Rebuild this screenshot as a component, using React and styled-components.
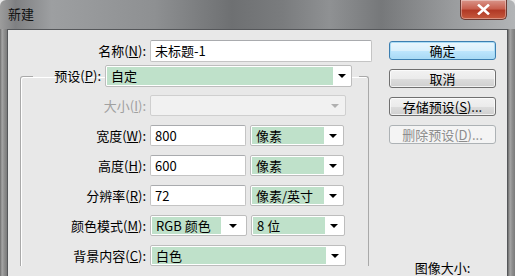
import React from 'react'
import styled, { createGlobalStyle, css } from 'styled-components';

const GlobalStyle = createGlobalStyle`
  html, body {
    margin: 0;
    padding: 0;
    background: #e8e8e8;
  }
  body {
    font-family: "Noto Sans CJK SC", "Noto Sans", sans-serif;
    font-size: 13px;
    color: #000;
  }
`;

const Window = styled.div`
  width: 515px;
  height: 276px;
  overflow: hidden;
  display: flex;
  flex-direction: column;
  background: linear-gradient(90deg, #9c9c9c 0%, #7f8082 3%, #9d9fa1 10%, #8e9092 30%, #6e7072 45%, #7a7c7e 55%, #8f9193 64%, #76787a 74%, #9a9c9e 88%, #b2b4b6 100%);
  border-radius: 6px 6px 0 0;
`;

const TitleBar = styled.div`
  height: 29px;
  flex: none;
  display: flex;
  align-items: flex-start;
`;

const Title = styled.div`
  padding: 6px 0 0 8px;
  font-size: 13px;
  line-height: 16px;
  color: #111;
`;

const CloseButton = styled.div`
  margin-left: auto;
  margin-right: 8px;
  width: 45px;
  height: 19px;
  display: flex;
  align-items: center;
  justify-content: center;
  background: linear-gradient(#d9958a 0%, #c8604f 45%, #b13a26 55%, #c65a3e 100%);
  border: 1px solid #6b3a33;
  border-top: none;
  border-radius: 0 0 5px 5px;
  box-shadow: inset 0 0 0 1px rgba(255, 255, 255, 0.35);
`;

const Body = styled.div`
  flex: 1;
  display: flex;
`;

const SideFrame = styled.div`
  width: 7px;
  flex: none;
  background: linear-gradient(90deg, #6d6d6d 0%, #a6a6a6 30%, #8f8f8f 60%, #7b7b7b 100%);
`;

const Client = styled.div`
  flex: 1;
  display: flex;
  background: #e8e8e8;
  border: 1px solid #55575a;
  border-bottom: none;
`;

const LeftCol = styled.div`
  width: 364px;
  flex: none;
  padding-top: 10px;
  display: flex;
  flex-direction: column;
`;

const RightCol = styled.div`
  flex: 1;
  padding-top: 11px;
  display: flex;
  flex-direction: column;
  gap: 9px;
`;

const Row = styled.div`
  display: flex;
  align-items: center;
  gap: 4px;
  height: ${p => p.$h || 21}px;
`;

const Label = styled.label`
  width: ${p => p.$w}px;
  flex: none;
  text-align: right;
  white-space: nowrap;
  line-height: 16px;
  color: ${p => (p.$disabled ? '#a0a0a0' : '#000')};
`;

const Input = styled.div`
  box-sizing: border-box;
  width: ${p => p.$w}px;
  height: 100%;
  padding: 0 4px;
  display: flex;
  align-items: center;
  background: #fff;
  border: 1px solid #c4c4c4;
  border-top-color: #a9abae;
  border-radius: 2px;
  line-height: 16px;
`;

const SelectBox = styled.div`
  box-sizing: border-box;
  width: ${p => p.$w}px;
  height: 100%;
  padding: 1px;
  display: flex;
  background: ${p => (p.$disabled ? '#f1f1f1' : '#fff')};
  border: 1px solid ${p => (p.$disabled ? '#cfcfcf' : '#bdbdbd')};
  border-radius: 2px;
`;

const SelectValue = styled.div`
  flex: 1;
  display: flex;
  align-items: center;
  padding-left: 4px;
  line-height: 16px;
  background: ${p => (p.$disabled ? 'transparent' : '#bfe1ca')};
`;

const Arrow = styled.div`
  width: ${p => p.$w || 18}px;
  flex: none;
  display: flex;
  align-items: center;
  justify-content: center;
  &::after {
    content: '';
    border-left: 4px solid transparent;
    border-right: 4px solid transparent;
    border-top: 4px solid ${p => (p.$disabled ? '#b0b0b0' : '#000')};
  }
`;

const Group = styled.fieldset`
  margin: 3px 0 0 12px;
  padding: 0;
  min-inline-size: 0;
  width: 349px;
  box-sizing: border-box;
  border: 1px solid #a9a9a9;
  border-bottom: none;
  border-radius: 3px 3px 0 0;
  box-shadow: inset 1px 1px 0 #fff;
`;

const Legend = styled.legend`
  margin-left: 12px;
  padding: 0 7px 0 0;
  height: 22px;
  display: flex;
  align-items: center;
  gap: 4px;
`;

const GroupRows = styled.div`
  padding-top: 8px;
  display: flex;
  flex-direction: column;
  gap: 9px;
`;

const Button = styled.div`
  box-sizing: border-box;
  margin-left: 17px;
  width: 107px;
  height: 19px;
  display: flex;
  align-items: center;
  justify-content: center;
  line-height: 16px;
  border-radius: 3px;
  border: 1px solid #707070;
  background: linear-gradient(#f2f2f2 0%, #ebebeb 50%, #dddddd 51%, #cfcfcf 100%);
  box-shadow: inset 0 0 0 1px rgba(255, 255, 255, 0.7);
  ${p => p.$default && css`
    border-color: #3c7fb1;
    background: linear-gradient(#eaf6fd 0%, #d9f0fc 50%, #bee6fd 51%, #a7d9f5 100%);
    box-shadow: inset 0 0 0 1px #aadcf5;
  `}
  ${p => p.$disabled && css`
    border-color: #adb2b5;
    background: #f4f4f4;
    box-shadow: none;
    color: #8d8d8d;
  `}
`;

const SizeInfo = styled.div`
  margin-top: 107px;
  align-self: center;
  padding-left: 6px;
  line-height: 15px;
`;

const Select = ({ w, value, arrow, disabled }) => (
  <SelectBox $w={w} $disabled={disabled}>
    <SelectValue $disabled={disabled}>{value}</SelectValue>
    <Arrow $w={arrow} $disabled={disabled} />
  </SelectBox>
);

const App = () => {
  return (
    <Window>
      <GlobalStyle />
      <TitleBar>
        <Title>新建</Title>
        <CloseButton>
          <svg width="13" height="11" viewBox="0 0 13 11">
            <path d="M2 1.5 L11 9.5 M11 1.5 L2 9.5" stroke="#fff" strokeWidth="2.6" strokeLinecap="square" />
          </svg>
        </CloseButton>
      </TitleBar>
      <Body>
        <SideFrame />
        <Client>
          <LeftCol>
            <Row $h={22}>
              <Label $w={138}>名称(<u>N</u>):</Label>
              <Input $w={222}>未标题-1</Input>
            </Row>
            <Group>
              <Legend>
                <Label $w={68}>预设(<u>P</u>):</Label>
                <Select w={247} value="自定" arrow={17} />
              </Legend>
              <GroupRows>
                <Row>
                  <Label $w={125} $disabled>大小(<u>I</u>):</Label>
                  <Select w={196} disabled />
                </Row>
                <Row>
                  <Label $w={125}>宽度(<u>W</u>):</Label>
                  <Input $w={96}>800</Input>
                  <Select w={94} value="像素" />
                </Row>
                <Row>
                  <Label $w={125}>高度(<u>H</u>):</Label>
                  <Input $w={96}>600</Input>
                  <Select w={94} value="像素" />
                </Row>
                <Row>
                  <Label $w={125}>分辨率(<u>R</u>):</Label>
                  <Input $w={96}>72</Input>
                  <Select w={94} value="像素/英寸" />
                </Row>
                <Row>
                  <Label $w={125}>颜色模式(<u>M</u>):</Label>
                  <Select w={97} value="RGB 颜色" arrow={24} />
                  <Select w={94} value="8 位" />
                </Row>
                <Row>
                  <Label $w={125}>背景内容(<u>C</u>):</Label>
                  <Select w={196} value="白色" />
                </Row>
              </GroupRows>
            </Group>
          </LeftCol>
          <RightCol>
            <Button $default>确定</Button>
            <Button>取消</Button>
            <Button>存储预设(<u>S</u>)...</Button>
            <Button $disabled>删除预设(<u>D</u>)...</Button>
            <SizeInfo>图像大小:</SizeInfo>
          </RightCol>
        </Client>
        <SideFrame />
      </Body>
    </Window>
  )
}

export default App
